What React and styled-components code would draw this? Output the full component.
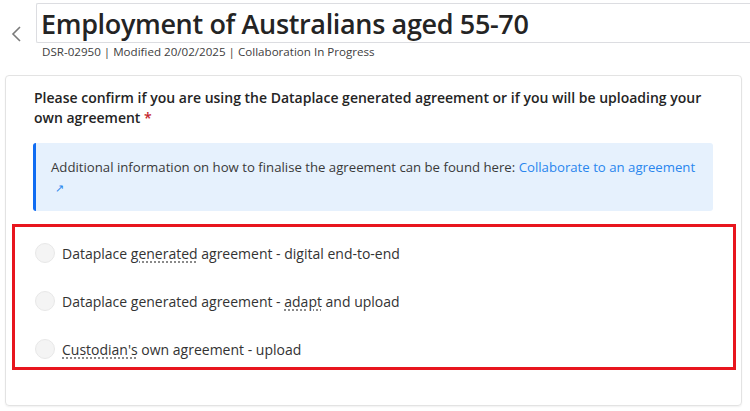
import React from "react";
import styled, { createGlobalStyle } from "styled-components";

const Global = createGlobalStyle`
  html, body { margin: 0; padding: 0; background: #ffffff; }
  body { font-family: "Open Sans", "Noto Sans", Arial, sans-serif; color: #242424; }
  * { box-sizing: border-box; }
`;

const Page = styled.div`
  width: 750px;
  height: 411px;
  overflow: hidden;
  background: #fff;
`;

const Header = styled.header`
  display: flex;
  align-items: flex-start;
  padding-top: 3px;
  height: 75px;
`;

const BackButton = styled.button`
  width: 36px;
  height: 40px;
  margin-top: 11px;
  padding: 0 0 0 10px;
  border: none;
  background: none;
  display: flex;
  align-items: center;
  justify-content: flex-start;
  cursor: pointer;
`;

const TitleBlock = styled.div`
  flex: 1;
  display: flex;
  flex-direction: column;
  min-width: 0;
`;

const TitleInput = styled.div`
  height: 40px;
  width: 730px;
  border: 1px solid #dcdde1;
  border-right: none;
  border-radius: 2px 0 0 2px;
  padding-left: 4px;
  display: flex;
  align-items: center;
  font-size: 27px;
  font-weight: 600;
  color: #242424;
  white-space: nowrap;
  letter-spacing: -0.35px;
`;

const Meta = styled.div`
  margin-top: 1px;
  padding-left: 6px;
  font-size: 11.6px;
  color: #404040;
  white-space: nowrap;
`;

const Card = styled.section`
  margin: 0 8px 0 5px;
  height: 331px;
  border: 1px solid #e3e3e3;
  border-radius: 4px;
  box-shadow: 0 1px 2px rgba(0, 0, 0, 0.06);
  padding: 12px 5px 0 6px;
`;

const Question = styled.p`
  margin: 0 0 0 22px;
  font-size: 14px;
  font-weight: 600;
  line-height: 20px;
  color: #242424;
  max-width: 680px;
`;

const Required = styled.span`
  color: #c4262e;
`;

const InfoBox = styled.div`
  margin: 15px 23px 0 21px;
  background: #e6f1fd;
  border-left: 3px solid #0f6cf2;
  border-radius: 3px;
  padding: 14px 6px 13px 15px;
  font-size: 13.2px;
  line-height: 20px;
  color: #3a3a3a;
  white-space: nowrap;
`;

const Link = styled.a`
  color: #2a86ee;
  text-decoration: none;
`;

const Arrow = styled.span`
  display: inline-block;
  margin-left: 4px;
  font-size: 11px;
  color: #2a86ee;
`;

const RadioGroup = styled.div`
  margin-top: 13px;
  height: 146px;
  border: 3px solid #e8161e;
  display: flex;
  flex-direction: column;
  padding: 16px 0 0 20px;
  gap: 28px;
`;

const Option = styled.label`
  display: flex;
  align-items: center;
  gap: 7px;
  font-size: 14px;
  color: #333;
  height: 20px;
`;

const Circle = styled.span`
  width: 20px;
  height: 20px;
  border-radius: 50%;
  background: #f4f4f4;
  border: 1px solid #e8e8e8;
  flex: none;
`;

const Squiggle = styled.span`
  text-decoration: underline dotted #8a8a8a;
  text-decoration-thickness: 1.5px;
  text-underline-offset: 3px;
`;

const options = [
  [["Dataplace "], ["generated", true], [" agreement - digital end-to-end"]],
  [["Dataplace generated agreement - "], ["adapt", true], [" and upload"]],
  [["Custodian's", true], [" own agreement - upload"]],
];

export default function App() {
  return (
    <Page>
      <Global />
      <Header>
        <BackButton aria-label="Back">
          <svg width="12" height="20" viewBox="0 0 12 20">
            <path d="M10 3 L3 10 L10 17" fill="none" stroke="#7a7a7a" strokeWidth="1.6" />
          </svg>
        </BackButton>
        <TitleBlock>
          <TitleInput>Employment of Australians aged 55-70</TitleInput>
          <Meta>DSR-02950 | Modified 20/02/2025 | Collaboration In Progress</Meta>
        </TitleBlock>
      </Header>
      <Card>
        <Question>
          Please confirm if you are using the Dataplace generated agreement or if you will be uploading your own agreement <Required>*</Required>
        </Question>
        <InfoBox>
          Additional information on how to finalise the agreement can be found here: <Link href="#">Collaborate to an agreement</Link>
          <br />
          <Arrow>↗</Arrow>
        </InfoBox>
        <RadioGroup role="radiogroup">
          {options.map((parts, i) => (
            <Option key={i}>
              <Circle />
              <span>
                {parts.map(([t, sq], j) => (sq ? <Squiggle key={j}>{t}</Squiggle> : <React.Fragment key={j}>{t}</React.Fragment>))}
              </span>
            </Option>
          ))}
        </RadioGroup>
      </Card>
    </Page>
  );
}
